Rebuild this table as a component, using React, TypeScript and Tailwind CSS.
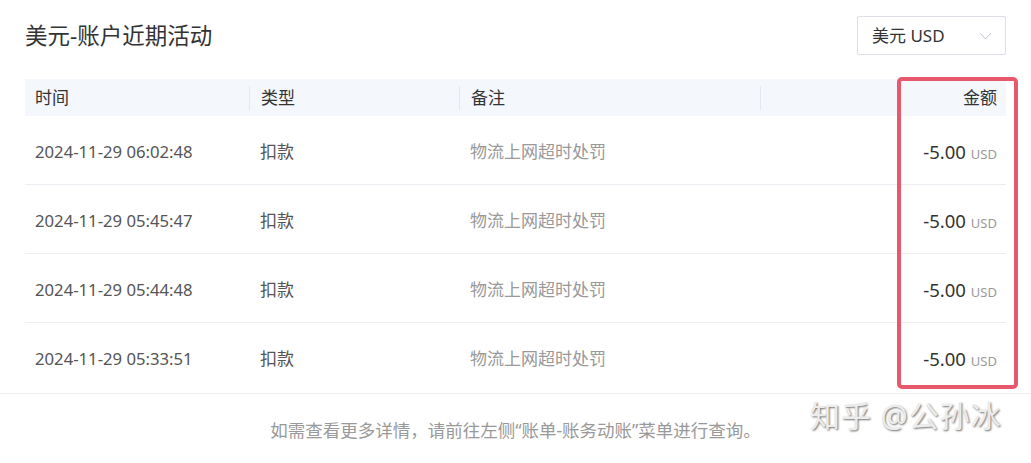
import React from "react";

const rows = [
  "2024-11-29 06:02:48",
  "2024-11-29 05:45:47",
  "2024-11-29 05:44:48",
  "2024-11-29 05:33:51",
];

export default function App() {
  const font = "font-['Noto_Sans','Noto_Sans_CJK_SC',sans-serif]";
  return (
    <div className={`relative w-[1031px] h-[463px] bg-white overflow-hidden ${font}`}>
      <div className="px-[25px]">
        <div className="flex items-center justify-between pt-[16px] h-[79px] pb-[24px]">
          <div className="text-[22.5px] text-[#333] leading-none mt-[2px]">美元-账户近期活动</div>
          <div className="w-[149px] h-[39px] border border-[#dcdfe6] rounded-[2px] flex items-center justify-between pl-[14px] pr-[13px]">
            <span className="text-[17px] text-[#333]">美元 USD</span>
            <svg width="13" height="8" viewBox="0 0 13 8" fill="none">
              <path d="M1 1 L6.5 7 L12 1" stroke="#c0c4cc" strokeWidth="1" />
            </svg>
          </div>
        </div>
        <div className="flex h-[37px] bg-[#f4f7fc] items-center text-[17px] text-[#333]">
          <div className="w-[224px] pl-[10px]">时间</div>
          <div className="w-[210px] pl-[11px] border-l border-[#e4e8ee] h-[24px] flex items-center">类型</div>
          <div className="w-[301px] pl-[11px] border-l border-[#e4e8ee] h-[24px] flex items-center">备注</div>
          <div className="flex-1 pr-[9px] border-l border-[#e4e8ee] h-[24px] flex items-center justify-end">金额</div>
        </div>
        {rows.map((d, i) => (
          <div
            key={d}
            className={`flex items-center h-[69px] pt-[3px] text-[17px] ${i < 3 ? "border-b border-[#ebeef2]" : ""}`}
          >
            <div className="w-[224px] pl-[10px] text-[16.7px] text-[#555]">{d}</div>
            <div className="w-[210px] pl-[11px] text-[#555]">扣款</div>
            <div className="w-[301px] pl-[11px] text-[#999]">物流上网超时处罚</div>
            <div className="flex-1 pr-[9px] flex items-baseline justify-end gap-[5px]">
              <span className="text-[18.5px] text-[#333]">-5.00</span>
              <span className="text-[13px] text-[#999]">USD</span>
            </div>
          </div>
        ))}
      </div>
      <div className="border-t border-[#ebeef2] mt-[1px] h-[70px] flex items-center justify-center pt-[4px]">
        <span className="text-[17.5px] text-[#999]">如需查看更多详情，请前往左侧“账单-账务动账”菜单进行查询。</span>
      </div>
      <div className="absolute left-[897px] top-[77px] w-[121px] h-[312px] border-[4px] border-[#e8586b] rounded-[5px]" />
      <div className="absolute left-[810px] top-[401px] text-[30px] leading-none text-[#ececec] [text-shadow:1px_1px_2px_#6f6f6f] tracking-[1px]">
        知乎 @公孙冰
      </div>
    </div>
  );
}
